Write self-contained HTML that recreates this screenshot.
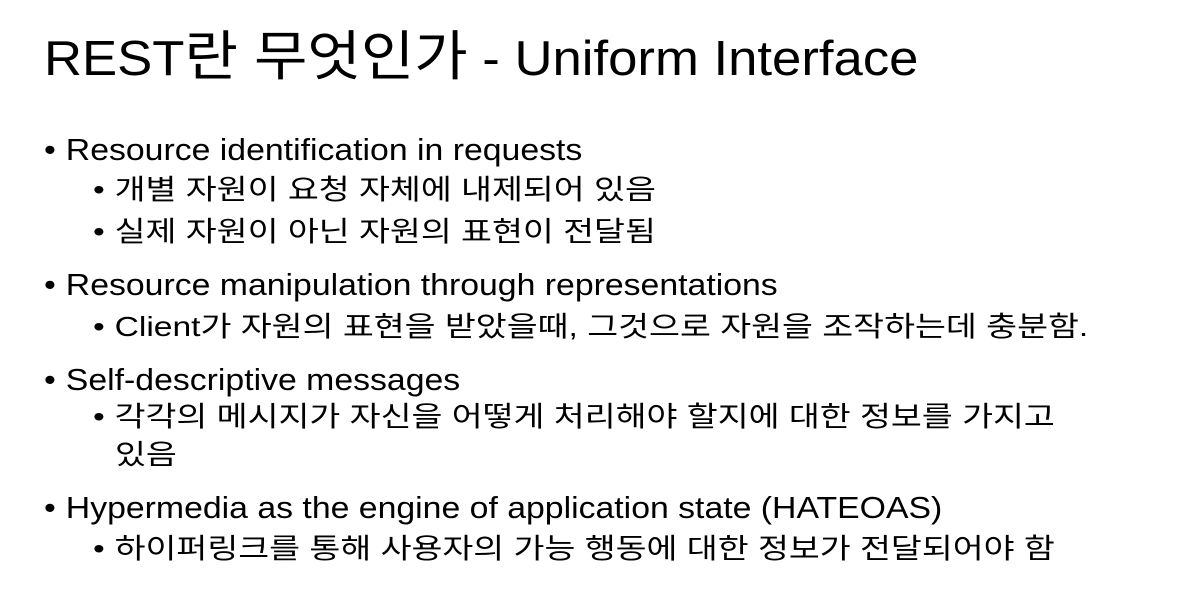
<!DOCTYPE html>
<html><head><meta charset="utf-8"><style>
body{margin:0;width:1177px;height:615px;background:#fff;overflow:hidden;font-family:"Liberation Sans","Noto Sans CJK KR",sans-serif;color:#000;}
.t{position:absolute;white-space:nowrap;line-height:1;transform-origin:0 50%;}
.h{left:44px;top:30px;font-size:49px;transform:scaleX(1.075);}
.h .k{font-size:54px;}
.l1{left:44px;font-size:31px;transform:scaleX(1.09);}
.l2{left:93px;font-size:28px;transform:scaleX(1.2);}
.l2 .b{width:18px;}
.b{display:inline-block;width:20px;}
</style></head><body>
<div class="t h">REST<span class="k">란 무엇인가</span> - Uniform Interface</div>
<div class="t l1" style="top:134px"><span class="b">•</span>Resource identification in requests</div>
<div class="t l2" style="top:176px"><span class="b">•</span>개별 자원이 요청 자체에 내제되어 있음</div>
<div class="t l2" style="top:218px"><span class="b">•</span>실제 자원이 아닌 자원의 표현이 전달됨</div>
<div class="t l1" style="top:269px"><span class="b">•</span>Resource manipulation through representations</div>
<div class="t l2" style="top:313px"><span class="b">•</span>Client가 자원의 표현을 받았을때, 그것으로 자원을 조작하는데 충분함.</div>
<div class="t l1" style="top:364px"><span class="b">•</span>Self-descriptive messages</div>
<div class="t l2" style="top:403px"><span class="b">•</span>각각의 메시지가 자신을 어떻게 처리해야 할지에 대한 정보를 가지고</div>
<div class="t l2" style="top:441px;left:115px">있음</div>
<div class="t l1" style="top:492px"><span class="b">•</span>Hypermedia as the engine of application state (HATEOAS)</div>
<div class="t l2" style="top:535px"><span class="b">•</span>하이퍼링크를 통해 사용자의 가능 행동에 대한 정보가 전달되어야 함</div>
</body></html>
